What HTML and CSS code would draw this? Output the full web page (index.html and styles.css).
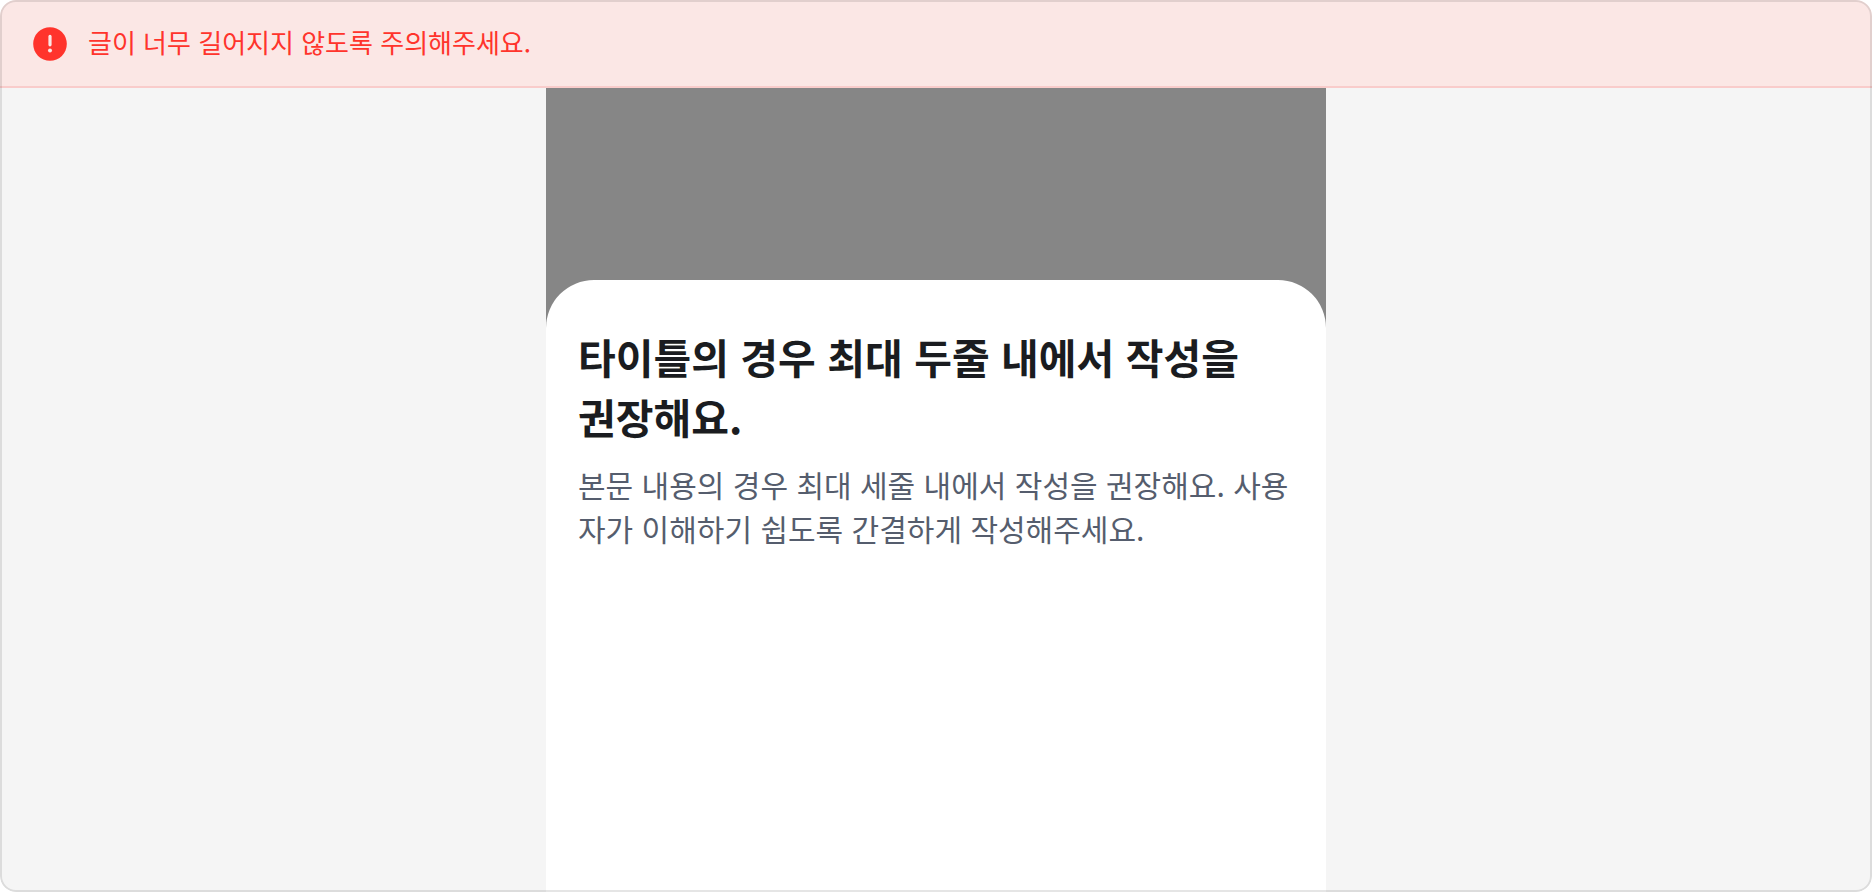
FILE: index.html
```html
<!DOCTYPE html>
<html lang="ko">
<head>
    <meta charset="UTF-8">
    <meta name="viewport" content="width=device-width, initial-scale=1.0">
    <title>Bottom Sheet</title>
    <link rel="stylesheet" href="styles.css">
</head>
<body>
<main class="example">
    <!-- Alert -->
    <div class="alert" role="alert">
        <svg class="alert-icon" viewBox="0 0 34 34" aria-hidden="true">
            <circle cx="17" cy="17" r="16.8" fill="#ff342c"/>
            <rect x="15.4" y="7.8" width="3.2" height="11.6" rx="1.6" fill="#fbe7e5"/>
            <circle cx="17" cy="23.6" r="2" fill="#fbe7e5"/>
        </svg>
        <p>글이 너무 길어지지 않도록 주의해주세요.</p>
    </div>

    <!-- Bottom sheet preview -->
    <div class="screen">
        <section class="sheet">
            <h1>타이틀의 경우 최대 두줄 내에서 작성을 권장해요.</h1>
            <p>본문 내용의 경우 최대 세줄 내에서 작성을 권장해요. 사용자가 이해하기 쉽도록 간결하게 작성해주세요.</p>
        </section>
    </div>
</main>
</body>
</html>
```
FILE: styles.css
```css
* {
    box-sizing: border-box;
}
body {
    margin: 0;
    background-color: white;
    font-family: "Noto Sans CJK KR", sans-serif;
}
h1, p {
    margin: 0;
}
.example {
    position: relative;
    display: flex;
    flex-direction: column;
    min-height: 100vh;
    background-color: #f5f5f5;
    border-radius: 16px;
    overflow: hidden;
}
/* frame drawn over the content */
.example::after {
    content: "";
    position: absolute;
    inset: 0;
    border: 2px solid rgba(0, 0, 0, 0.1);
    border-radius: 16px;
    pointer-events: none;
}
.alert {
    display: flex;
    align-items: center;
    gap: 21px;
    height: 88px;
    padding: 2px 33px 0;
    background-color: #fbe7e5;
    border-bottom: 2px solid #f9cccb;
    color: #ff342c;
    font-size: 26px;
    line-height: 40px;
}
.alert p {
    padding-bottom: 4px;
}
.alert-icon {
    flex: none;
    width: 34px;
    height: 34px;
}
.screen {
    display: flex;
    flex: 1;
    width: 100%;
    max-width: 780px;
    margin: 0 auto;
    padding-top: 192px;
    background-color: #868686;
}
.sheet {
    flex: 1;
    padding: 46px 32px;
    background-color: white;
    border-radius: 48px 48px 0 0;
}
.sheet h1 {
    margin-bottom: 16px;
    color: #1a1c20;
    font-size: 41px;
    font-weight: 700;
    line-height: 60px;
    word-break: keep-all;
}
.sheet p {
    color: #555d6d;
    font-size: 30px;
    line-height: 44px;
}
```
